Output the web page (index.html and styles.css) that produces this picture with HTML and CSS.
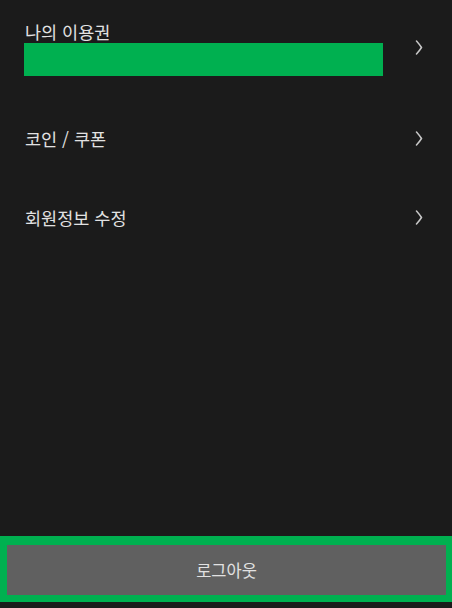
FILE: index.html
```html
<!DOCTYPE html>
<html lang="ko">

<head>
<meta charset="UTF-8">
<meta name="viewport" content="width=device-width, initial-scale=1.0">
<title>마이페이지</title>
<link rel="stylesheet" href="styles.css">
</head>

<body>

<div class="page">
    <ul class="menu">
        <li class="menu-item first">
            <div class="item-body">
                <span class="item-title">나의 이용권</span>
                <div class="ticket-bar"></div>
            </div>
            <svg class="chevron" width="8" height="15" viewBox="0 0 8 15"><path d="M1.5 1 Q5 5 6.5 7.5 Q5 10 1.5 14" fill="none" stroke="#c8c8c8" stroke-width="1.5" stroke-linecap="round"/></svg>
        </li>
        <li class="menu-item">
            <span class="item-title">코인 / 쿠폰</span>
            <svg class="chevron" width="8" height="15" viewBox="0 0 8 15"><path d="M1.5 1 Q5 5 6.5 7.5 Q5 10 1.5 14" fill="none" stroke="#c8c8c8" stroke-width="1.5" stroke-linecap="round"/></svg>
        </li>
        <li class="menu-item">
            <span class="item-title">회원정보 수정</span>
            <svg class="chevron" width="8" height="15" viewBox="0 0 8 15"><path d="M1.5 1 Q5 5 6.5 7.5 Q5 10 1.5 14" fill="none" stroke="#c8c8c8" stroke-width="1.5" stroke-linecap="round"/></svg>
        </li>
    </ul>

    <div class="logout-wrap">
        <button class="logout-btn" type="button">로그아웃</button>
    </div>
</div>

</body>
</html>
```

FILE: styles.css
```css
body { margin: 0; background-color: #1b1b1b; font-family: "Noto Sans CJK KR", "Noto Sans", sans-serif; color: #e2e2e2; }
.page { height: 608px; display: flex; flex-direction: column; }
.menu { list-style: none; margin: 0; padding: 0; }
.menu-item { height: 79px; display: flex; align-items: center; justify-content: space-between; padding: 0 29px 0 25px; }
.menu-item.first { height: 99px; align-items: flex-start; padding-top: 22px; box-sizing: border-box; }
.menu-item.first .chevron { margin-top: 18px; }
.item-title { font-size: 17.5px; line-height: 20px; }
.item-body { display: flex; flex-direction: column; }
.ticket-bar { width: 359px; height: 33px; margin: 1px 0 0 -1px; background-color: #00b050; }
.chevron { display: block; flex-shrink: 0; }
.logout-wrap { margin-top: auto; margin-bottom: 6px; background-color: #00b050; padding: 9px 6px 7px 7px; }
.logout-btn { display: block; width: 100%; height: 50px; border: none; background-color: #606060; color: #e2e2e2; font-family: inherit; font-size: 16.5px; }
```
